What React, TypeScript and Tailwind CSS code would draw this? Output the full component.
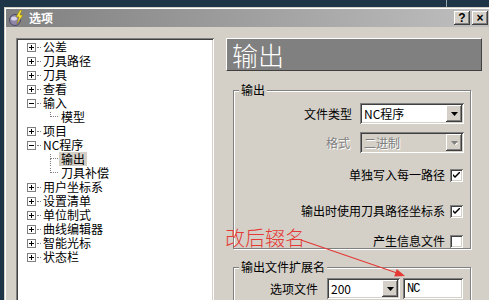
import React from "react";

// win classic bevels
const raised =
  "shadow-[inset_-1px_-1px_0_#404040,inset_1px_1px_0_#ffffff,inset_-2px_-2px_0_#808080,inset_2px_2px_0_#d4d0c8]";
const sunken =
  "shadow-[inset_1px_1px_0_#808080,inset_-1px_-1px_0_#ffffff,inset_2px_2px_0_#404040,inset_-2px_-2px_0_#d4d0c8]";

type Node = { t: string; k: "plus" | "minus" | "child"; last?: boolean; sel?: boolean };

const tree: Node[] = [
  { t: "公差", k: "plus" },
  { t: "刀具路径", k: "plus" },
  { t: "刀具", k: "plus" },
  { t: "查看", k: "plus" },
  { t: "输入", k: "minus" },
  { t: "模型", k: "child", last: true },
  { t: "项目", k: "plus" },
  { t: "NC程序", k: "minus" },
  { t: "输出", k: "child", sel: true },
  { t: "刀具补偿", k: "child", last: true },
  { t: "用户坐标系", k: "plus" },
  { t: "设置清单", k: "plus" },
  { t: "单位制式", k: "plus" },
  { t: "曲线编辑器", k: "plus" },
  { t: "智能光标", k: "plus" },
  { t: "状态栏", k: "plus" },
];

const ExpandBox = ({ open }: { open: boolean }) => (
  <span className="relative w-[9px] h-[9px] shrink-0 border border-[#808080] bg-white">
    <span className="absolute left-[1px] top-[3px] w-[5px] h-[1px] bg-black" />
    {!open && <span className="absolute left-[3px] top-[1px] w-[1px] h-[5px] bg-black" />}
  </span>
);

const TreeRow = ({ n }: { n: Node }) => {
  if (n.k === "child") {
    return (
      <div className="flex h-[14px] items-center">
        <span className="w-[32px] shrink-0" />
        <span className="relative w-[9px] h-[14px] shrink-0">
          <span className="absolute left-0 top-[2px] h-[5px] w-[8px] border-l border-b border-dotted border-[#808080]" />
          {!n.last && <span className="absolute left-0 top-[7px] h-[7px] border-l border-dotted border-[#808080]" />}
        </span>
        <span className={"px-[2px] leading-[14px] " + (n.sel ? "bg-[#d4d0c8]" : "")}>{n.t}</span>
      </div>
    );
  }
  return (
    <div className="flex h-[14px] items-center">
      <span className="w-[9px] shrink-0" />
      <ExpandBox open={n.k === "minus"} />
      <span className="w-[4px] ml-[1px] border-t border-dotted border-[#808080]" />
      <span className="ml-[2px] leading-[14px]">{n.t}</span>
    </div>
  );
};

const DropBtn = ({ disabled }: { disabled?: boolean }) => (
  <span className={"flex items-center justify-center w-[16px] h-[17px] bg-[#d4d0c8] " + raised}>
    <svg width="7" height="4" viewBox="0 0 7 4">
      {disabled && <path d="M2 2h5L4.5 4.5z" fill="#ffffff" />}
      <path d="M0 0h7L3.5 4z" fill={disabled ? "#808080" : "#000"} />
    </svg>
  </span>
);

const Combo = ({ value, w, disabled }: { value: string; w: string; disabled?: boolean }) => (
  <div className={"flex items-center h-[21px] p-[2px] " + w + " " + sunken + (disabled ? " bg-[#d4d0c8]" : " bg-white")}>
    <span
      className={
        "flex-1 pl-[2px] leading-[14px] " +
        (disabled ? "text-[#808080] [text-shadow:1px_1px_0_#ffffff]" : "text-black")
      }
    >
      {value}
    </span>
    <DropBtn disabled={disabled} />
  </div>
);

const Check = ({ on }: { on: boolean }) => (
  <span className={"flex items-center justify-center w-[13px] h-[13px] bg-white shrink-0 " + sunken}>
    {on && (
      <svg width="7" height="7" viewBox="0 0 7 7">
        <path d="M0 2l2 2 5-5v2L2 6 0 4z" fill="#000" />
      </svg>
    )}
  </span>
);

const GroupBox = ({ label, className, children }: { label: string; className: string; children: React.ReactNode }) => (
  <div className={"relative border border-[#808080] shadow-[inset_1px_1px_0_#ffffff,1px_1px_0_#ffffff] " + className}>
    <span className="absolute -top-[8px] left-[5px] px-[2px] bg-[#d4d0c8] leading-[14px]">{label}</span>
    {children}
  </div>
);

const TitleIcon = () => (
  <svg width="16" height="16" viewBox="0 0 16 16">
    <circle cx="6" cy="10" r="5.5" fill="#8f86a8" stroke="#4d4766" strokeWidth="1" />
    <ellipse cx="5" cy="8.5" rx="3" ry="2" fill="#d7d3e6" />
    <path d="M11 0L7 7h3l-2 7 6-9h-3l2-5z" fill="#f4e23a" stroke="#8a7a10" strokeWidth="0.6" />
  </svg>
);

const TitleBtn = ({ children }: { children: React.ReactNode }) => (
  <span
    className={
      "flex items-center justify-center w-[16px] h-[14px] bg-[#d4d0c8] text-[12px] font-bold leading-none text-black font-['Liberation_Sans',sans-serif] " +
      raised
    }
  >
    {children}
  </span>
);

export default function App() {
  return (
    <div className="relative w-[489px] h-[300px] overflow-hidden bg-[#1d3546] font-['Noto_Sans_CJK_SC',sans-serif] text-[12px] text-black">
      <span className="absolute left-[446px] top-0 w-[1px] h-[7px] bg-[#9aa4ab]" />

      {/* dialog window */}
      <div className="absolute left-[4px] top-[7px] w-[492px] h-[320px] bg-[#d4d0c8] p-[2px] shadow-[inset_1px_1px_0_#d4d0c8,inset_2px_2px_0_#ffffff]">
        <div className="flex items-center h-[18px] bg-gradient-to-r from-[#808080] to-[#c0c0c0] pl-[3px] pr-[6px]">
          <TitleIcon />
          <span className="ml-[4px] text-white font-bold leading-[14px]">选项</span>
          <div className="ml-auto flex gap-[2px]">
            <TitleBtn>?</TitleBtn>
            <TitleBtn>×</TitleBtn>
          </div>
        </div>

        <div className="flex pt-[11px] pl-[10px]">
          <div className={"w-[198px] h-[280px] bg-white p-[2px] " + sunken}>
            {tree.map((n, i) => (
              <TreeRow key={i} n={n} />
            ))}
          </div>

          <div className="ml-[12px] w-[256px] flex flex-col">
            <div className="h-[33px] bg-[#808080] border-l border-t border-[#ffffff] border-r border-b border-r-[#404040] border-b-[#404040] flex items-center pl-[5px]">
              <span className="text-white text-[26px] leading-[30px] font-light">输出</span>
            </div>

            <GroupBox label="输出" className="mt-[19px] ml-[7px] w-[238px] h-[159px] pt-[12px] pr-[6px]">
              <div className="flex items-center justify-end">
                <span className="mr-[8px] leading-[14px]">文件类型</span>
                <Combo value="NC程序" w="w-[104px]" />
              </div>
              <div className="flex items-center justify-end mt-[8px]">
                <span className="mr-[10px] leading-[14px] text-[#808080] [text-shadow:1px_1px_0_#ffffff]">格式</span>
                <Combo value="二进制" w="w-[104px]" disabled />
              </div>
              <div className="flex items-center justify-end mt-[15px] pr-[1px]">
                <span className="mr-[5px] leading-[14px]">单独写入每一路径</span>
                <Check on />
              </div>
              <div className="flex items-center justify-end mt-[22px] pr-[1px]">
                <span className="mr-[5px] leading-[14px]">输出时使用刀具路径坐标系</span>
                <Check on />
              </div>
              <div className="flex items-center justify-end mt-[16px] pr-[1px]">
                <span className="mr-[5px] leading-[14px]">产生信息文件</span>
                <Check on={false} />
              </div>
            </GroupBox>

            <GroupBox label="输出文件扩展名" className="mt-[18px] ml-[7px] w-[238px] h-[60px] pt-[10px] pr-[7px]">
              <div className="flex items-center justify-end">
                <span className="mr-[9px] leading-[14px]">选项文件</span>
                <Combo value="200" w="w-[73px]" />
                <div className={"ml-[3px] w-[60px] h-[21px] bg-white flex items-center pl-[4px] " + sunken}>
                  <span className="leading-[14px] font-['Liberation_Mono',monospace] text-[12px] tracking-[-1px]">NC</span>
                </div>
              </div>
            </GroupBox>
          </div>
        </div>
      </div>

      {/* red annotation */}
      <span className="absolute left-[225px] top-[226px] text-[20px] leading-[24px] text-[#e53935] font-light">改后辍名</span>
      <svg className="absolute left-0 top-0 pointer-events-none" width="489" height="300" viewBox="0 0 489 300">
        <line x1="301" y1="240" x2="397" y2="273" stroke="#e53935" strokeWidth="1.2" />
        <path d="M405 276L394.2 276.5L396.8 268.9z" fill="#e53935" />
      </svg>
    </div>
  );
}
